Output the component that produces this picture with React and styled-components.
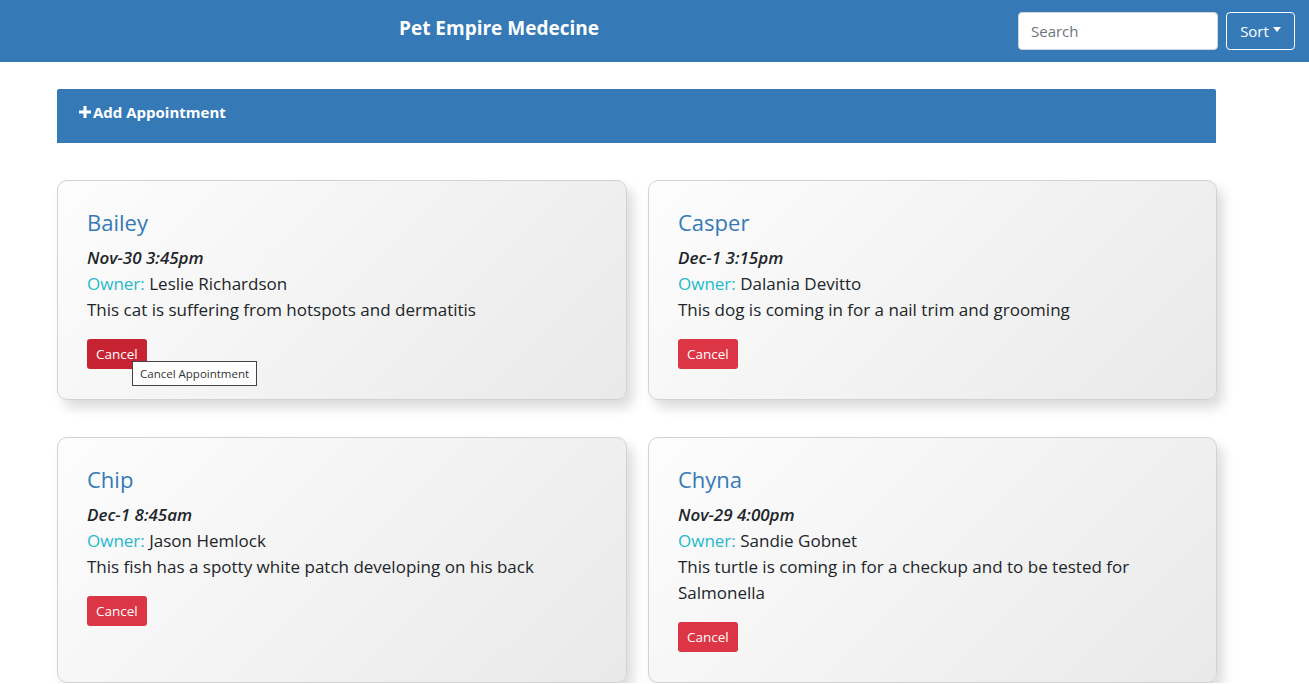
import React from 'react'
import styled, { createGlobalStyle } from 'styled-components'

const GlobalStyle = createGlobalStyle`
  body {
    margin: 0;
    background: #fff;
    font-family: "Open Sans", "Noto Sans", sans-serif;
    color: #212529;
  }
`

const NavBar = styled.nav`
  height: 62px;
  background: #357ab7;
  display: flex;
  align-items: center;
  padding: 0 14px 0 0;
  box-sizing: border-box;
`

const Brand = styled.div`
  flex: 1;
  text-align: center;
  white-space: nowrap;
  padding-left: 380px;
  box-sizing: border-box;
  margin-right: 400px;
  color: #fff;
  font-weight: 700;
  font-size: 19px;
  margin-top: -7px;
`

const SearchInput = styled.input`
  width: 200px;
  height: 38px;
  box-sizing: border-box;
  border: 1px solid #ced4da;
  border-radius: 4px;
  padding: 0 12px;
  font-family: inherit;
  font-size: 15px;
  color: #495057;
  &::placeholder {
    color: #6c757d;
  }
`

const SortButton = styled.button`
  margin-left: 8px;
  height: 38px;
  width: 69px;
  box-sizing: border-box;
  border: 1px solid #fff;
  border-radius: 4px;
  background: transparent;
  color: #fff;
  font-family: inherit;
  font-size: 15px;
  display: flex;
  align-items: center;
  justify-content: center;
  gap: 4px;
  padding: 0;
  margin-top: -1px;
`

const Caret = styled.span`
  width: 0;
  height: 0;
  border-left: 4px solid transparent;
  border-right: 4px solid transparent;
  border-top: 5px solid #fff;
  margin-top: -2px;
`

const Main = styled.main`
  width: 1159px;
  margin: 27px 0 0 57px;
`

const AddBar = styled.div`
  height: 54px;
  background: #357ab7;
  border-radius: 2px 2px 0 0;
  color: #fff;
  font-weight: 700;
  font-size: 15px;
  display: flex;
  align-items: center;
  padding: 0 0 8px 21px;
  box-sizing: border-box;
  gap: 1px;
`

const CardGrid = styled.div`
  margin-top: 37px;
  display: grid;
  grid-template-columns: 570px 569px;
  column-gap: 21px;
  row-gap: 37px;
`

const Card = styled.div`
  position: relative;
  border: 1px solid #d2d2d2;
  border-radius: 10px;
  background: linear-gradient(135deg, #fdfdfd 0%, #e9e9e9 100%);
  box-shadow: 6px 8px 12px rgba(0, 0, 0, 0.14);
  padding: 25px 30px 30px 29px;
  min-height: 220px;
  box-sizing: border-box;
`

const PetName = styled.h3`
  margin: 0 0 7px;
  font-size: 22px;
  font-weight: 400;
  color: #357ab7;
  line-height: 32px;
`

const Line = styled.div`
  font-size: 17px;
  line-height: 26px;
  max-width: 480px;
`

const DateLine = styled(Line)`
  font-style: italic;
  font-weight: 600;
`

const OwnerLabel = styled.span`
  color: #27b8cc;
`

const CancelButton = styled.button`
  margin-top: 16px;
  height: 30px;
  padding: 0 9px;
  border: none;
  border-radius: 3px;
  background: ${p => (p.hover ? '#c82333' : '#dc3545')};
  color: #fff;
  font-family: inherit;
  font-size: 13.5px;
`

const Tooltip = styled.div`
  position: absolute;
  left: 74px;
  top: 180px;
  background: #fff;
  border: 1px solid #444;
  padding: 4px 7px;
  font-size: 11.5px;
  color: #333;
  white-space: nowrap;
`

const appointments = [
  {
    name: 'Bailey',
    date: 'Nov-30 3:45pm',
    owner: 'Leslie Richardson',
    note: 'This cat is suffering from hotspots and dermatitis',
    hover: true
  },
  {
    name: 'Casper',
    date: 'Dec-1 3:15pm',
    owner: 'Dalania Devitto',
    note: 'This dog is coming in for a nail trim and grooming'
  },
  {
    name: 'Chip',
    date: 'Dec-1 8:45am',
    owner: 'Jason Hemlock',
    note: 'This fish has a spotty white patch developing on his back'
  },
  {
    name: 'Chyna',
    date: 'Nov-29 4:00pm',
    owner: 'Sandie Gobnet',
    note: 'This turtle is coming in for a checkup and to be tested for Salmonella'
  }
]

export default function App() {
  return (
    <>
      <GlobalStyle />
      <NavBar>
        <Brand>Pet Empire Medecine</Brand>
        <SearchInput placeholder="Search" />
        <SortButton>
          Sort <Caret />
        </SortButton>
      </NavBar>
      <Main>
        <AddBar>
          <svg width="14" height="14" viewBox="0 0 14 14">
            <path d="M7 1v12M1 7h12" stroke="#fff" strokeWidth="3" />
          </svg>
          Add Appointment
        </AddBar>
        <CardGrid>
          {appointments.map(a => (
            <Card key={a.name}>
              <PetName>{a.name}</PetName>
              <DateLine>{a.date}</DateLine>
              <Line>
                <OwnerLabel>Owner:</OwnerLabel> {a.owner}
              </Line>
              <Line>{a.note}</Line>
              <CancelButton hover={a.hover}>Cancel</CancelButton>
              {a.hover && <Tooltip>Cancel Appointment</Tooltip>}
            </Card>
          ))}
        </CardGrid>
      </Main>
    </>
  )
}
